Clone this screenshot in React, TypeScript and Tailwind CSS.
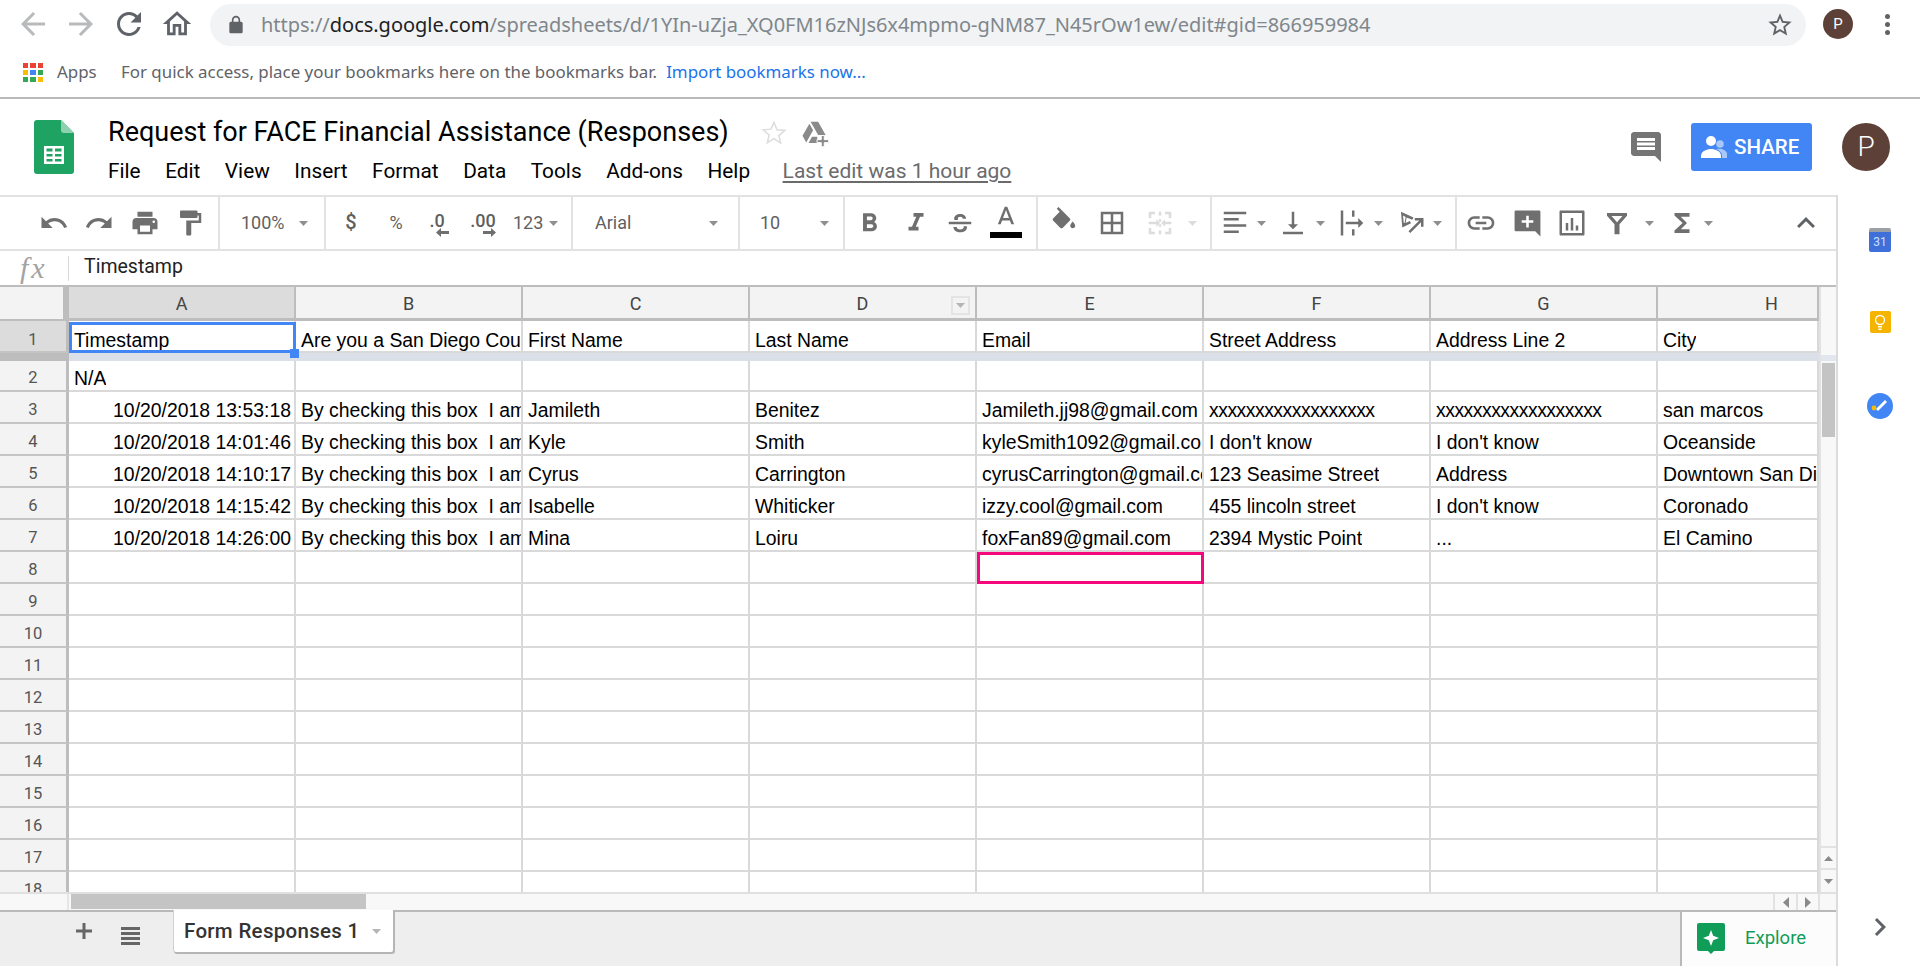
import React from "react";

const G = "#6f6f6f";
const Ic = ({ d, s = 30, c = G, cls = "" }: { d: string; s?: number; c?: string; cls?: string }) => (
  <svg width={s} height={s} viewBox="0 0 24 24" fill={c} className={cls}><path d={d} /></svg>
);
const Caret = ({ c = "#8f8f8f" }: { c?: string }) => (
  <svg width="11" height="5" viewBox="0 0 11 5" className="shrink-0"><path d="M1 0h9L5.500 5z" fill={c} /></svg>
);
const Sep = ({ cls = "" }: { cls?: string }) => <div className={"w-[2px] h-full bg-[#e2e2e2] shrink-0 " + cls} />;
const Slot = ({ cls, children }: { cls: string; children?: React.ReactNode }) => (
  <div className={"h-full flex items-center justify-center shrink-0 " + cls}>{children}</div>
);
const CaretSlot = ({ cls = "", c }: { cls?: string; c?: string }) => (
  <div className={"w-[11px] h-full flex items-center shrink-0 " + cls}><Caret c={c} /></div>
);
const P = {
  undo: "M12.5 8c-2.65 0-5.05.99-6.9 2.6L2 7v9h9l-3.62-3.62c1.39-1.16 3.16-1.88 5.12-1.88 3.54 0 6.55 2.31 7.6 5.5l2.37-.78C21.08 11.03 17.15 8 12.5 8z",
  redo: "M18.4 10.6C16.55 8.99 14.15 8 11.5 8c-4.65 0-8.58 3.03-9.96 7.22L3.9 16c1.05-3.19 4.05-5.5 7.6-5.5 1.95 0 3.73.72 5.12 1.88L13 16h9V7l-3.6 3.6z",
  print: "M19 8H5c-1.66 0-3 1.34-3 3v6h4v4h12v-4h4v-6c0-1.66-1.34-3-3-3zm-3 11H8v-5h8v5zm3-7c-.55 0-1-.45-1-1s.45-1 1-1 1 .45 1 1-.45 1-1 1zm-1-9H6v4h12V3z",
  paint: "M18 4V3c0-.55-.45-1-1-1H5c-.55 0-1 .45-1 1v4c0 .55.45 1 1 1h12c.55 0 1-.45 1-1V6h1v4H9v11c0 .55.45 1 1 1h2c.55 0 1-.45 1-1v-9h8V4h-3z",
  bold: "M15.6 10.79c.97-.67 1.65-1.77 1.65-2.79 0-2.26-1.75-4-4-4H7v14h7.04c2.09 0 3.71-1.7 3.71-3.79 0-1.52-.86-2.82-2.15-3.42zM10 6.5h3c.83 0 1.5.67 1.5 1.5s-.67 1.5-1.5 1.5h-3v-3zm3.5 9H10v-3h3.5c.83 0 1.5.67 1.5 1.5s-.67 1.5-1.5 1.5z",
  italic: "M10 4v3h2.21l-3.42 8H6v3h8v-3h-2.21l3.42-8H18V4z",
  strike: "M3 13h18v-2H3v2zM7.6 9.5h3.1c-.3-.3-.5-.6-.5-1 0-1 .9-1.6 2-1.6s2 .6 2.1 1.7h2.6C16.8 6.3 14.8 4.8 12.2 4.8c-2.7 0-4.9 1.6-4.9 3.8 0 .3.1.6.3.9zM14.7 14.6c.2.2.3.5.3.8 0 1-1 1.7-2.9 1.7-1.6 0-2.6-.7-2.8-2H6.7c.2 2.7 2.5 4.2 5.4 4.2 3.2 0 5.5-1.5 5.5-4 0-.3 0-.5-.1-.7z",
  colorA: "M11 3L5.5 17h2.25l1.12-3h6.25l1.12 3h2.25L13 3h-2zm-1.38 9L12 5.67 14.38 12H9.62z",
  fill: "M16.56 8.94L7.62 0 6.21 1.41l2.38 2.38-5.15 5.15c-.59.59-.59 1.54 0 2.12l5.5 5.5c.29.29.68.44 1.06.44s.77-.15 1.06-.44l5.5-5.5c.59-.58.59-1.53 0-2.12zM19 11.5s-2 2.17-2 3.5c0 1.1.9 2 2 2s2-.9 2-2c0-1.33-2-3.5-2-3.5z",
  borders: "M3 3v18h18V3H3zm8 16H5v-6h6v6zm0-8H5V5h6v6zm8 8h-6v-6h6v6zm0-8h-6V5h6v6z",
  merge: "M3 3h5v2H5v3H3V3zm13 0h5v5h-2V5h-3V3zM3 16h2v3h3v2H3v-5zm16 0h2v5h-5v-2h3v-3zM11 3h2v3h-2zM11 18h2v3h-2zM11 9h2v2h-2zM11 13h2v2h-2zM3 11h6V9l3 3-3 3v-2H3v-2zM21 11h-5V9l-3 3 3 3v-2h5v-2z",
  alignL: "M3 3h18v2H3zM3 8h12v2H3zM3 13h18v2H3zM3 18h12v2H3z",
  valign: "M16 13h-3V3h-2v10H8l4 4 4-4zM4 19v2h16v-2H4z",
  wrap: "M3 2h2v20H3zM12 2h2v5h-2zM12 17h2v5h-2zM7 11h10V8l4 4-4 4v-3H7z",
  rotate: "M4 3l10 4.5-1 1.8L8.5 7.5 7.7 12l3.4-1.6.9 1.8-7 3.4L4 3zm1.6 3l.6 6 .7-.3.8-4.6L5.6 6zM22 8v7h-2v-3.6l-8.6 8.6-1.4-1.4L18.6 10H15V8h7z",
  link: "M3.9 12c0-1.71 1.39-3.1 3.1-3.1h4V7H7c-2.76 0-5 2.24-5 5s2.24 5 5 5h4v-1.9H7c-1.71 0-3.1-1.39-3.1-3.1zM8 13h8v-2H8v2zm9-6h-4v1.9h4c1.71 0 3.1 1.39 3.1 3.1s-1.39 3.1-3.1 3.1h-4V17h4c2.76 0 5-2.24 5-5s-2.24-5-5-5z",
  addc: "M3 2h18c.55 0 1 .45 1 1v19l-4-4H3c-.55 0-1-.45-1-1V3c0-.55.45-1 1-1zm10 4h-2v3.5H7.5v2H11V15h2v-3.5h3.5v-2H13V6z",
  chart: "M3 2h18c.55 0 1 .45 1 1v18c0 .55-.45 1-1 1H3c-.55 0-1-.45-1-1V3c0-.55.45-1 1-1zm1 2v16h16V4H4zm3 8h2v6H7v-6zm4-4h2v10h-2V8zm4 6h2v4h-2v-4z",
  filter: "M4 4h16v2.200L14 13v8h-4v-8L4 6.200V4zm3.600 2.400L12 11.400l4.400-5H7.600z",
  sigma: "M18 4H6v2l6.5 6L6 18v2h12v-3h-7l5-5-5-5h7z",
  less: "M12 8l-6 6 1.41 1.41L12 10.83l4.59 4.58L18 14z",
  comment: "M21.99 4c0-1.1-.89-2-1.99-2H4c-1.1 0-2 .9-2 2v12c0 1.1.9 2 2 2h14l4 4-.01-18zM18 14H6v-2h12v2zm0-3H6V9h12v2zm0-3H6V6h12v2z",
  back: "M20 11H7.83l5.59-5.59L12 4l-8 8 8 8 1.41-1.41L7.83 13H20v-2z",
  fwd: "M12 4l-1.41 1.41L16.17 11H4v2h12.17l-5.58 5.59L12 20l8-8z",
  refresh: "M17.65 6.35C16.2 4.9 14.21 4 12 4c-4.42 0-7.99 3.58-7.99 8s3.57 8 7.99 8c3.73 0 6.84-2.55 7.73-6h-2.08c-.82 2.33-3.04 4-5.65 4-3.31 0-6-2.69-6-6s2.69-6 6-6c1.66 0 3.14.69 4.22 1.78L13 11h7V4l-2.35 2.35z",
  home: "M12 5.69l5 4.5V18h-2v-6H9v6H7v-7.81l5-4.5M12 3L2 12h3v8h6v-6h2v6h6v-8h3L12 3z",
  lock: "M18 8h-1V6c0-2.76-2.24-5-5-5S7 3.24 7 6v2H6c-1.1 0-2 .9-2 2v10c0 1.1.9 2 2 2h12c1.1 0 2-.9 2-2V10c0-1.1-.9-2-2-2zM9 8V6c0-1.66 1.34-3 3-3s3 1.34 3 3v2H9z",
  star: "M22 9.24l-7.19-.62L12 2 9.19 8.63 2 9.24l5.46 4.73L5.82 21 12 17.27 18.18 21l-1.63-7.03L22 9.24zM12 15.4l-3.76 2.27 1-4.28-3.32-2.88 4.38-.38L12 6.1l1.71 4.04 4.38.38-3.32 2.88 1 4.28L12 15.4z",
  next: "M10 6L8.59 7.41 13.17 12l-4.58 4.59L10 18l6-6z",
};

const CHROME = "font-['Noto_Sans',sans-serif]";
const ROBOTO = "font-['Roboto',sans-serif]";
const ARIAL = "font-['Liberation_Sans',Arial,sans-serif]";

function Browser() {
  return (
    <div className="h-[99px] border-b-2 border-[#b9b9b9] bg-white shrink-0">
      <div className="h-[48px] flex items-center pl-[15px]">
        <Slot cls="w-[36px]"><Ic d={P.back} s={36} c="#b8babc" /></Slot>
        <Slot cls="w-[36px] ml-[12px]"><Ic d={P.fwd} s={36} c="#b8babc" /></Slot>
        <Slot cls="w-[36px] ml-[12px]"><Ic d={P.refresh} s={36} c="#5f6368" /></Slot>
        <Slot cls="w-[36px] ml-[12px]"><Ic d={P.home} s={34} c="#5f6368" /></Slot>
        <div className="ml-[15px] w-[1596px] h-[42px] mt-[1px] bg-[#f1f3f4] rounded-full flex items-center pl-[16px] pr-[12px]">
          <Ic d={P.lock} s={20} c="#5f6368" />
          <div className={CHROME + " ml-[15px] text-[20px] tracking-[-0.02px] text-[#80868b] whitespace-nowrap"}>
            https://<span className="text-[#202124]">docs.google.com</span>/spreadsheets/d/1YIn-uZja_XQ0FM16zNJs6x4mpmo-gNM87_N45rOw1ew/edit#gid=866959984
          </div>
          <div className="ml-auto"><Ic d={P.star} s={28} c="#5f6368" /></div>
        </div>
        <div className="ml-[17px] w-[30px] h-[30px] rounded-full bg-[#5d4037] text-white flex items-center justify-center text-[15px] font-['Roboto',sans-serif]">P</div>
        <div className="ml-[31px] flex flex-col gap-[3px] items-center w-[6px]">
          <span className="w-[5px] h-[5px] rounded-full bg-[#5f6368]" />
          <span className="w-[5px] h-[5px] rounded-full bg-[#5f6368]" />
          <span className="w-[5px] h-[5px] rounded-full bg-[#5f6368]" />
        </div>
      </div>
      <div className={CHROME + " h-[47px] flex items-center pl-[23px] text-[16.9px] text-[#5f6368]"}>
        <div className="grid grid-cols-3 gap-[2px] w-[20px] mt-[2px]">
          {["#ea4335","#ea4335","#ea4335","#fbbc05","#4285f4","#34a853","#34a853","#34a853","#fbbc05"].map((c,i)=>(
            <span key={i} className={"h-[5px] " + (c==="#ea4335"?"bg-[#ea4335]":c==="#fbbc05"?"bg-[#fbbc05]":c==="#4285f4"?"bg-[#4285f4]":"bg-[#34a853]")} />
          ))}
        </div>
        <span className="ml-[14px] w-[64px]">Apps</span>
        <span className="whitespace-nowrap">For quick access, place your bookmarks here on the bookmarks bar.</span>
        <span className="ml-[9px] text-[#1a73e8] whitespace-nowrap">Import bookmarks now...</span>
      </div>
    </div>
  );
}

function Header() {
  const menu = ["File","Edit","View","Insert","Format","Data","Tools","Add-ons","Help"];
  return (
    <div className="h-[96px] flex bg-white shrink-0 pl-[34px]">
      <svg width="40" height="54" viewBox="0 0 40 54" className="mt-[21px] shrink-0">
        <path d="M3 0h24l13 13v38a3 3 0 0 1-3 3H3a3 3 0 0 1-3-3V3a3 3 0 0 1 3-3z" fill="#1ea362" />
        <path d="M27 0l13 13H30a3 3 0 0 1-3-3z" fill="#8ed1b1" />
        <path d="M10 26h20v18H10zm2.5 2.5v3h6v-3zm8.5 0v3h6.5v-3zm-8.500 5.500v2.500h6v-2.500zm8.500 0v2.500h6.500v-2.500zm-8.500 5v2.500h6v-2.500zm8.500 0v2.500h6.500v-2.500z" fill="#fff" fillRule="evenodd" />
      </svg>
      <div className="ml-[34px] flex flex-col">
        <div className="h-[27px] mt-[20px] flex items-center">
          <span className={ROBOTO + " text-[27px] text-black whitespace-nowrap"}>Request for FACE Financial Assistance (Responses)</span>
          <svg width="28" height="28" viewBox="0 0 24 24" className="ml-[31px]"><path d="M12 3l2.6 6.2 6.7.6-5.1 4.4 1.5 6.500L12 16.800 6.300 20.200l1.500-6.500-5.100-4.400 6.700-.6z" fill="none" stroke="#dcdcdc" strokeWidth="1.300" /></svg>
          <svg width="30" height="30" viewBox="0 0 24 24" className="ml-[12px]"><path d="M8.500 3h6l6 10.500h-6zM7.500 4.500l3 5.200L5 19.500l-3-5.300zM6.800 20h7v-5h-4.200z" fill="#8a8a8a" /><path d="M17 14h2.400v3.300H23v2.400h-3.600V23H17v-3.300h-3.400v-2.400H17z" fill="#8a8a8a" stroke="#fff" strokeWidth=".8" /></svg>
        </div>
        <div className={ROBOTO + " flex items-center mt-[10px] text-[20.800px] text-black gap-[24.5px] whitespace-nowrap"}>
          {menu.map((m) => <span key={m}>{m}</span>)}
          <span className="ml-[8px] text-[21px] text-[#6b6b6b] underline decoration-2 underline-offset-[3px]">Last edit was 1 hour ago</span>
        </div>
      </div>
      <div className="ml-auto flex items-start pt-[24px] pr-[30px]">
        <div className="mt-[6px]"><Ic d={P.comment} s={36} c="#757575" /></div>
        <div className={ROBOTO + " ml-[27px] w-[121px] h-[48px] rounded-[3px] bg-[#4285f4] text-white flex items-center pl-[10px] font-medium text-[20.500px]"}>
          <svg width="26" height="26" viewBox="0 0 26 26" className="shrink-0"><circle cx="10" cy="7" r="5" fill="#fff" /><path d="M0 22c0-5 6-7 10-7s10 2 10 7v2H0z" fill="#fff" /><circle cx="19" cy="10" r="3.800" fill="#a9c8fa" /><path d="M15 15c5-1 11 1 11 5v4h-5v-3c0-2-3-5-6-6z" fill="#a9c8fa" /></svg>
          <span className="ml-[7px]">SHARE</span>
        </div>
        <div className={ROBOTO + " ml-[30px] w-[48px] h-[48px] rounded-full bg-[#5d4037] text-white text-[28px] font-light flex items-center justify-center"}>P</div>
      </div>
    </div>
  );
}

function Toolbar() {
  const tx = ROBOTO + " text-[#5f5f5f]";
  return (
    <div className="h-[56px] border-y-2 border-[#e2e2e2] flex items-center pl-[32px] bg-white shrink-0">
      <Slot cls="w-[44px]"><Ic d={P.undo} /></Slot>
      <Slot cls="w-[46px]"><Ic d={P.redo} /></Slot>
      <Slot cls="w-[45px]"><Ic d={P.print} /></Slot>
      <Slot cls="w-[45px]"><Ic d={P.paint} /></Slot>
      <Sep cls="ml-[6px]" />
      <div className={tx + " w-[104px] h-full flex items-center pl-[21px] text-[18px] shrink-0"}><span className="w-[57px] -mt-[2px]">100%</span><Caret /></div>
      <Sep />
      <Slot cls={"w-[50px] text-[20px] font-medium " + tx}><span className="-mt-[2px]">$</span></Slot>
      <Slot cls={"w-[40px] text-[18px] " + tx}><span className="-mt-[2px]">%</span></Slot>
      <Slot cls="w-[42px] relative">
        <span className={tx + " text-[18px] font-medium -mt-[6px]"}>.0</span>
        <svg width="13" height="9" viewBox="0 0 13 9" className="absolute left-[20px] top-[31px]"><path d="M5 0v3h8v3H5v3L0 4.500z" fill="#6f6f6f" /></svg>
      </Slot>
      <Slot cls="w-[50px] relative">
        <span className={tx + " text-[18px] font-medium -mt-[6px]"}>.00</span>
        <svg width="13" height="9" viewBox="0 0 13 9" className="absolute left-[25px] top-[31px]"><path d="M8 0v3H0v3h8v3l5-4.500z" fill="#6f6f6f" /></svg>
      </Slot>
      <div className={tx + " w-[63px] h-full flex items-center pl-[5px] text-[18px] shrink-0"}><span className="w-[35px] -mt-[2px]">123</span><Caret /></div>
      <Sep />
      <div className={tx + " w-[165px] h-full flex items-center pl-[22px] text-[18px] shrink-0"}><span className="w-[113px] -mt-[2px]">Arial</span><Caret /></div>
      <Sep />
      <div className={tx + " w-[103px] h-full flex items-center pl-[20px] text-[18px] shrink-0"}><span className="w-[59px] -mt-[2px]">10</span><Caret /></div>
      <Sep />
      <Slot cls="w-[48px]"><Ic d={P.bold} s={31} /></Slot>
      <Slot cls="w-[45px]"><Ic d={P.italic} s={30} /></Slot>
      <Slot cls="w-[44px]"><Ic d={P.strike} s={30} /></Slot>
      <Slot cls="w-[48px] flex-col">
        <Ic d={P.colorA} s={30} cls="-mt-[6px] -mb-[1px]" />
        <div className="w-[32px] h-[6px] bg-black" />
      </Slot>
      <Sep cls="ml-[6px]" />
      <Slot cls="w-[52px]"><Ic d={P.fill} s={30} cls="-mt-[3px]" /></Slot>
      <Slot cls="w-[44px]"><Ic d={P.borders} s={30} /></Slot>
      <Slot cls="w-[50px] pl-[1px]"><Ic d={P.merge} s={30} c="#dcdcdc" /></Slot>
      <CaretSlot cls="ml-[3px] mr-[12px]" c="#dcdcdc" />
      <Sep />
      <Slot cls="w-[44px] pl-[1px]"><Ic d={P.alignL} s={30} /></Slot>
      <CaretSlot />
      <Slot cls="w-[44px] ml-[4px]"><Ic d={P.valign} s={30} /></Slot>
      <CaretSlot />
      <Slot cls="w-[43px] ml-[4px]"><Ic d={P.wrap} s={30} /></Slot>
      <CaretSlot />
      <Slot cls="w-[43px] ml-[5px]"><Ic d={P.rotate} s={30} /></Slot>
      <CaretSlot cls="mr-[12px]" />
      <Sep />
      <Slot cls="w-[47px]"><Ic d={P.link} s={32} /></Slot>
      <Slot cls="w-[46px]"><Ic d={P.addc} s={31} /></Slot>
      <Slot cls="w-[44px]"><Ic d={P.chart} s={30} /></Slot>
      <Slot cls="w-[46px]"><Ic d={P.filter} s={30} /></Slot>
      <CaretSlot cls="ml-[4px]" />
      <Slot cls="w-[42px] ml-[6px]"><Ic d={P.sigma} s={30} /></Slot>
      <CaretSlot />
      <Slot cls="w-[60px] ml-auto"><Ic d={P.less} s={36} c="#5f6368" /></Slot>
    </div>
  );
}

function FormulaBar() {
  return (
    <div className="h-[34px] flex items-center bg-white shrink-0">
      <div className="w-[68px] h-full flex items-center pl-[20px]">
        <span className="font-['Liberation_Serif',serif] italic text-[30px] tracking-[3px] text-[#a3a3a3] leading-none">fx</span>
      </div>
      <div className="w-px h-[25px] bg-[#d9d9d9]" />
      <span className={ROBOTO + " ml-[15px] -mt-[2px] text-[19.500px] text-[#222]"}>Timestamp</span>
    </div>
  );
}

const COLS = "grid grid-cols-[69px_repeat(7,227px)_161px]";
const rows: string[][] = [
  ["10/20/2018 13:53:18","By checking this box  I am","Jamileth","Benitez","Jamileth.jj98@gmail.com","xxxxxxxxxxxxxxxxxx","xxxxxxxxxxxxxxxxxx","san marcos"],
  ["10/20/2018 14:01:46","By checking this box  I am","Kyle","Smith","kyleSmith1092@gmail.com","I don't know","I don't know","Oceanside"],
  ["10/20/2018 14:10:17","By checking this box  I am","Cyrus","Carrington","cyrusCarrington@gmail.com","123 Seasime Street","Address","Downtown San Diego"],
  ["10/20/2018 14:15:42","By checking this box  I am","Isabelle","Whiticker","izzy.cool@gmail.com","455 lincoln street","I don't know","Coronado"],
  ["10/20/2018 14:26:00","By checking this box  I am","Mina","Loiru","foxFan89@gmail.com","2394 Mystic Point","...","El Camino"],
];

const RowHead = ({ n, sel = false, cls = "pt-[5px]" }: { n: number; sel?: boolean; cls?: string }) => (
  <div className={(sel ? "bg-[#dcdcdc] " : "bg-[#f3f3f3] ") + ROBOTO + " h-full min-h-0 border-r-[3px] border-b-2 border-b-[#c4c4c4] border-r-[#bdbdbd] flex items-center justify-center text-[16.500px] leading-[18px] text-[#555] " + cls}>{n}</div>
);
const Cell = ({ t = "", right = false, children, top = "pt-[5px]" }: { t?: string; right?: boolean; children?: React.ReactNode; top?: string }) => (
  <div className={"relative h-full min-w-0 min-h-0 border-r-2 border-b-2 border-[#d9d9d9] flex items-center text-black text-[19.400px] leading-[20px] " + top + " " + ARIAL + (right ? " justify-end pr-[3px]" : " pl-[5px]")}>
    <span className={"block overflow-x-clip whitespace-pre min-w-0 " + (/^x+$/.test(t) ? "tracking-[-0.5px]" : "")}>{t}</span>
    {children}
  </div>
);

function Grid() {
  const letters = ["A","B","C","D","E","F","G","H"];
  return (
    <div className="h-[607px] flex border-t-2 border-[#bdbdbd] shrink-0 bg-white">
      <div className="w-[1819px] h-full overflow-hidden shrink-0">
        <div className={COLS + " h-[34px]"}>
          <div className="bg-[#f3f3f3] h-full border-r-[6px] border-b-2 border-r-[#bdbdbd] border-b-[#bdbdbd]" />
          {letters.map((l, i) => (
            <div key={l} className={(i === 0 ? "bg-[#dcdcdc] " : "bg-[#f3f3f3] ") + ROBOTO + " relative h-full border-r-2 border-b-[3px] border-[#bdbdbd] flex items-center pt-[1px] text-[18px] text-[#444] " + (i === 7 ? "border-r-0 pl-[107px]" : "justify-center")}>
              {l}
              {l === "D" && (
                <div className="absolute right-[5px] top-[9px] w-[19px] h-[19px] border-2 border-[#e4e4e4] flex items-center justify-center"><Caret c="#b5b5b5" /></div>
              )}
            </div>
          ))}
        </div>
        <div className={COLS + " h-[32px]"}>
          <RowHead n={1} sel cls="pt-[8px]" />
          <Cell t="Timestamp" top="pt-[8px]">
            <div className="absolute left-0 top-[1px] right-[-2px] bottom-[-2px] border-[3px] border-[#4285f4] z-10" />
            <div className="absolute right-[-5px] bottom-[-7px] w-[9px] h-[9px] bg-[#4285f4] z-10" />
          </Cell>
          <Cell t="Are you a San Diego County resident?" top="pt-[8px]" />
          <Cell t="First Name" top="pt-[8px]" />
          <Cell t="Last Name" top="pt-[8px]" />
          <Cell t="Email" top="pt-[8px]" />
          <Cell t="Street Address" top="pt-[8px]" />
          <Cell t="Address Line 2" top="pt-[8px]" />
          <Cell t="City" top="pt-[8px]" />
        </div>
        <div className={COLS + " h-[8px]"}>
          <div className="bg-[#bdbdbd]" />
          <div className="col-span-8 bg-[#dadfe8]" />
        </div>
        <div className={COLS + " h-[31px]"}>
          <RowHead n={2} />
          <Cell t="N/A" top="pt-[4px]" />
          {Array.from({ length: 7 }).map((_, i) => <Cell key={i} />)}
        </div>
        {rows.map((r, i) => (
          <div key={i} className={COLS + " h-[32px]"}>
            <RowHead n={i + 3} />
            {r.map((t, j) => <Cell key={j} t={t} right={j === 0} />)}
          </div>
        ))}
        {Array.from({ length: 11 }).map((_, i) => (
          <div key={i} className={COLS + " h-[32px]"}>
            <RowHead n={i + 8} />
            {Array.from({ length: 8 }).map((_, j) => (
              <Cell key={j}>
                {i === 0 && j === 4 && <div className="absolute left-0 top-0 right-[-2px] bottom-[-2px] border-[3px] border-[#f5087c] z-10" />}
              </Cell>
            ))}
          </div>
        ))}
      </div>
      <div className="flex-1 flex flex-col bg-[#f8f8f8] border-l-2 border-[#e2e2e2]">
        <div className="h-[74px] border-b-[6px] border-[#e2e6ee] shrink-0" />
        <div className="h-[74px] mt-[2px] mx-[1px] bg-[#c4c4c4] shrink-0" />
        <div className="flex-1" />
        <div className="h-[24px] flex items-center justify-center border-y-2 border-[#e2e2e2] shrink-0">
          <svg width="11" height="5" viewBox="0 0 11 5"><path d="M1 5h9L5.500 0z" fill="#8a8a8a" /></svg>
        </div>
        <div className="h-[22px] flex items-center justify-center shrink-0"><Caret c="#8a8a8a" /></div>
      </div>
    </div>
  );
}

function HScroll() {
  return (
    <div className="h-[18px] flex bg-[#f8f8f8] border-t-2 border-[#e0e0e0] shrink-0">
      <div className="w-[69px] h-full border-r-2 border-[#e6e6e6]" />
      <div className="w-[295px] ml-[2px] mb-[1px] bg-[#c4c4c4]" />
      <div className="flex-1" />
      <div className="w-[23px] h-full border-l-2 border-[#e2e2e2] flex items-center justify-center">
        <svg width="6" height="11" viewBox="0 0 6 11"><path d="M6 0v11L0 5.500z" fill="#8a8a8a" /></svg>
      </div>
      <div className="w-[24px] h-full border-x-2 border-[#e2e2e2] flex items-center justify-center">
        <svg width="6" height="11" viewBox="0 0 6 11"><path d="M0 0v11l6-5.500z" fill="#8a8a8a" /></svg>
      </div>
      <div className="w-[16px]" />
    </div>
  );
}

function Tabs() {
  return (
    <div className="h-[56px] bg-[#eeeeee] border-t-2 border-[#b9b9b9] flex shrink-0">
      <Slot cls="w-[46px] ml-[61px] -mt-[8px]"><svg width="16" height="16" viewBox="0 0 16 16"><path d="M6.500 0h3v6.500H16v3H9.500V16h-3V9.500H0v-3h6.500z" fill="#666" /></svg></Slot>
      <div className="w-[19px] ml-[14px] h-[18px] mt-[15px] flex flex-col justify-between">
        {[0, 1, 2, 3].map((i) => <span key={i} className="h-[3px] bg-[#666]" />)}
      </div>
      <div className={ROBOTO + " relative -top-[2px] ml-[34px] w-[219px] h-[42px] bg-white rounded-b-[2px] shadow-[1px_1px_0_1px_#b5b5b5,-1px_0_0_0_#d0d0d0] flex items-center pl-[10px] text-[20.500px] font-medium text-[#333]"}>
        <span className="tracking-[0.3px] whitespace-nowrap">Form Responses 1</span>
        <span className="ml-[11px]"><Caret c="#b5b5b5" /></span>
      </div>
      <div className="ml-auto w-[156px] h-full bg-[#fcfcfc] border-l-2 border-[#b9b9b9] flex items-center pl-[15px]">
        <svg width="28" height="31" viewBox="0 0 28 31" className="shrink-0 -mt-[1px]"><path d="M2 0h24a2 2 0 0 1 2 2v24a2 2 0 0 1-2 2h-9l-3 3-3-3H2a2 2 0 0 1-2-2V2a2 2 0 0 1 2-2z" fill="#0f9d58" /><path d="M14 7l2.200 5.800L22 15l-5.800 2.200L14 23l-2.200-5.800L6 15l5.800-2.200z" fill="#fff" /></svg>
        <span className={ROBOTO + " ml-[20px] text-[18.500px] text-[#0f9d58]"}>Explore</span>
      </div>
    </div>
  );
}

function Sidebar() {
  return (
    <div className="flex-1 border-l-2 border-[#dadce0] bg-white flex flex-col items-center pl-[2px]">
      <div className="mt-[33px] w-[22px] h-[24px] rounded-[2px] bg-[#3f6fd8] border-t-4 border-[#9aa0a6] flex items-center justify-center text-[12px] text-[#cfe0ff] font-['Roboto',sans-serif]">31</div>
      <div className="mt-[59px] w-[21px] h-[22px] bg-[#f4b400] rounded-[2px] flex items-center justify-center">
        <svg width="12" height="16" viewBox="0 0 12 16"><circle cx="6" cy="6" r="4.500" fill="none" stroke="#fff" strokeWidth="1.300" /><path d="M4 12h4v1.500H4zM4.500 14.500h3V16h-3z" fill="#fff" /></svg>
      </div>
      <svg width="26" height="26" viewBox="0 0 26 26" className="mt-[60px]"><circle cx="13" cy="13" r="13" fill="#4285f4" /><path d="M9 16L18 7l2 2-9 9z" fill="#fff" /><circle cx="7" cy="15" r="2.400" fill="#fbbc05" /></svg>
      <div className="mt-auto mb-[21px]"><Ic d={P.next} s={36} c="#5f6368" /></div>
    </div>
  );
}

export default function App() {
  return (
    <div className="w-[1920px] h-[966px] overflow-hidden bg-white flex flex-col">
      <Browser />
      <Header />
      <div className="flex flex-1 min-h-0">
        <div className="w-[1836px] flex flex-col shrink-0">
          <Toolbar />
          <FormulaBar />
          <Grid />
          <HScroll />
          <Tabs />
        </div>
        <Sidebar />
      </div>
    </div>
  );
}
